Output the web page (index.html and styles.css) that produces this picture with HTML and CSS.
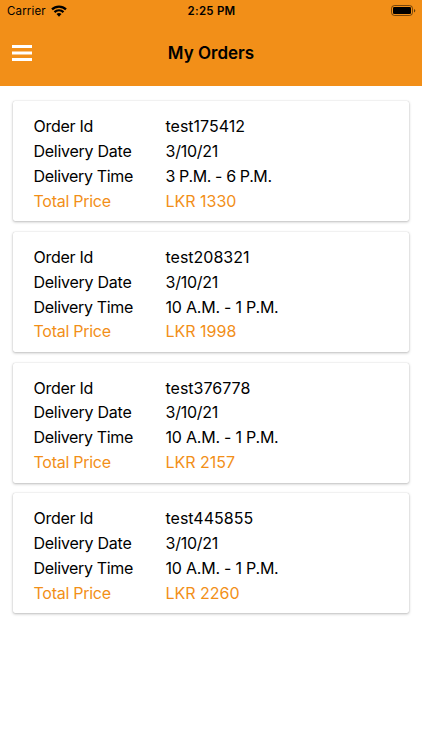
FILE: index.html
```html
<!DOCTYPE html>
<html lang="en">
<head>
<meta charset="utf-8">
<title>My Orders</title>
<link rel="stylesheet" href="styles.css">
</head>
<body>
<header class="header">
  <div class="status">
    <div class="carrier"><span class="carrier-name">Carrier</span>
      <svg class="wifi" viewBox="0 0 16 12"><g fill="none" stroke="#000" stroke-width="2.2"><path d="M1 4.4a10 10 0 0 1 14 0"/><path d="M3.5 7.1a6.4 6.4 0 0 1 9 0"/></g><path d="M5.5 9.1a3.6 3.6 0 0 1 5 0L8 11.7z"/></svg>
    </div>
    <span class="time">2:25 PM</span>
    <svg class="battery" viewBox="0 0 25 12"><rect x=".5" y=".5" width="21" height="10" rx="3" fill="none" stroke="#000" stroke-opacity=".5"/><rect x="2" y="2" width="18" height="7" rx="1.3"/><path d="M23 4v3.5q1.3-.6 1.3-1.75T23 4z" fill-opacity=".6"/></svg>
  </div>
  <div class="nav">
    <svg class="menu" viewBox="0 0 20 16"><path fill="#fff" d="M0 0h20v3H0zM0 6.5h20v3H0zM0 13h20v3H0z"/></svg>
    <h1 class="title">My Orders</h1>
  </div>
</header>
<main class="orders">
  <dl class="card"><dt>Order Id</dt><dd>test175412</dd><dt class="label">Delivery Date</dt><dd class="date">3/10/21</dd><dt class="label time-label">Delivery Time</dt><dd class="evening">3 P.M. - 6 P.M.</dd><dt class="total">Total Price</dt><dd class="total">LKR 1330</dd></dl>
  <dl class="card"><dt>Order Id</dt><dd>test208321</dd><dt class="label">Delivery Date</dt><dd class="date">3/10/21</dd><dt class="label time-label">Delivery Time</dt><dd class="midday">10 A.M. - 1 P.M.</dd><dt class="total">Total Price</dt><dd class="total">LKR 1998</dd></dl>
  <dl class="card"><dt>Order Id</dt><dd>test376778</dd><dt class="label">Delivery Date</dt><dd class="date">3/10/21</dd><dt class="label time-label">Delivery Time</dt><dd class="midday">10 A.M. - 1 P.M.</dd><dt class="total">Total Price</dt><dd class="total">LKR 2157</dd></dl>
  <dl class="card"><dt>Order Id</dt><dd>test445855</dd><dt class="label">Delivery Date</dt><dd class="date">3/10/21</dd><dt class="label time-label">Delivery Time</dt><dd class="midday">10 A.M. - 1 P.M.</dd><dt class="total">Total Price</dt><dd class="total">LKR 2260</dd></dl>
</main>
</body>
</html>
```
FILE: styles.css
```css
* { box-sizing: border-box; }
body { margin: 0; min-height: 750px; background: #fff; color: #000; font-family: Inter, "Liberation Sans", sans-serif; }
.header { height: 86px; background: #f28f18; }
.status { display: grid; grid-template-columns: 1fr auto 1fr; align-items: center; height: 21px; padding: 0 6px 0 7px; font-size: 11.5px; }
.carrier { display: flex; align-items: center; gap: 5px; }
.carrier-name { letter-spacing: .15px; line-height: 22px; }
.wifi { width: 16px; height: 12px; }
.time { font-weight: 600; letter-spacing: .25px; line-height: 22px; }
.battery { width: 25px; height: 12px; justify-self: end; }
.nav { display: grid; grid-template-columns: 1fr auto 1fr; align-items: center; height: 64px; padding: 0 12px; }
.menu { width: 20px; height: 16px; }
.title { margin: 0; font-size: 17px; font-weight: 600; line-height: 22px; }
.orders { display: flex; flex-direction: column; gap: 10.67px; padding: 15.2px 13px; }
.card { display: grid; grid-template-columns: 132px 1fr; grid-auto-rows: 24.8px; align-items: center; height: 120px; margin: 0; padding: 12.7px 20.5px 0; background: #fff; border-radius: 2px; box-shadow: 0 0 1px rgba(0,0,0,.22), 0 1px 3px rgba(0,0,0,.26); font-size: 16px; white-space: nowrap; }
.card dt { letter-spacing: -.26px; }
.card dd { margin: 0; }
.card .time-label { letter-spacing: -.35px; }
.card .date { letter-spacing: -.25px; }
.card .evening { letter-spacing: -.38px; }
.card .midday { letter-spacing: -.22px; }
.total { color: #f28f18; }
```
